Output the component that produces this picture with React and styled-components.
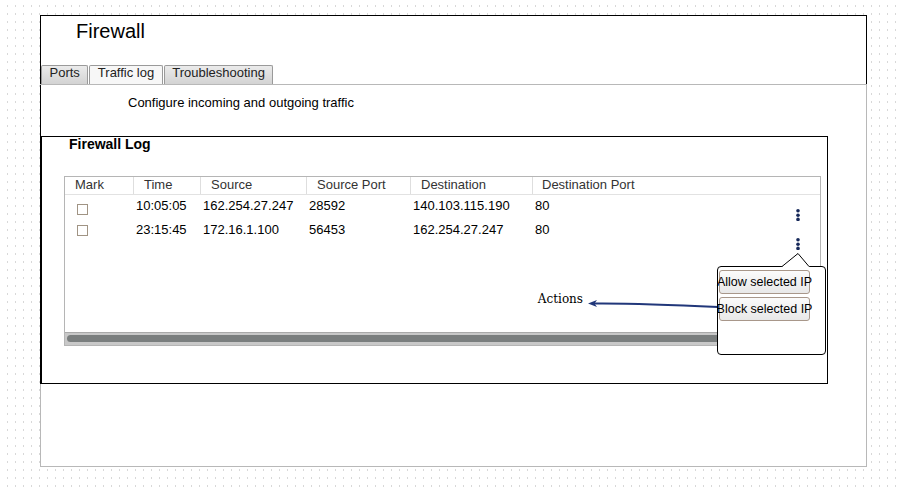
import React from "react";
import styled, { createGlobalStyle } from "styled-components";

const rows = [
  { id: 1, time: "10:05:05", source: "162.254.27.247", sourcePort: "28592", dest: "140.103.115.190", destPort: "80", boxTop: 9, dotsTop: 14 },
  { id: 2, time: "23:15:45", source: "172.16.1.100", sourcePort: "56453", dest: "162.254.27.247", destPort: "80", boxTop: 6, dotsTop: 19 },
];

const columns = ["Mark", "Time", "Source", "Source Port", "Destination", "Destination Port"];
const tabs = ["Ports", "Traffic log", "Troubleshooting"];

const Kebab = () => (
  <svg width="4" height="12" viewBox="0 0 4 12">
    <circle cx="2" cy="1.8" r="1.8" fill="#17295a" />
    <circle cx="2" cy="6.2" r="1.8" fill="#17295a" />
    <circle cx="2" cy="10.4" r="1.8" fill="#17295a" />
  </svg>
);

const App = () => {
  const [active, setActive] = React.useState("Traffic log");
  return (
    <Page>
      <GlobalStyle />
      <Window>
        <Header>
          <Title>Firewall</Title>
          <Tabs>
            {tabs.map((t) => (
              <Tab key={t} $active={t === active} onClick={() => setActive(t)}>
                {t}
              </Tab>
            ))}
          </Tabs>
        </Header>
        <Content>
          <Body>
            <Description>Configure incoming and outgoing traffic</Description>
            <LogPanel>
              <PanelTitle>Firewall Log</PanelTitle>
              <Table>
                <HeaderRow>
                  {columns.map((c) => (
                    <HeaderCell key={c}>{c}</HeaderCell>
                  ))}
                </HeaderRow>
                {rows.map((r) => (
                  <Row key={r.id}>
                    <MarkCell>
                      <Checkbox $top={r.boxTop} />
                    </MarkCell>
                    <Cell>{r.time}</Cell>
                    <Cell>{r.source}</Cell>
                    <Cell>{r.sourcePort}</Cell>
                    <Cell>{r.dest}</Cell>
                    <LastCell>
                      <span>{r.destPort}</span>
                      <DotsButton $top={r.dotsTop}>
                        <Kebab />
                      </DotsButton>
                    </LastCell>
                  </Row>
                ))}
                <Spacer />
                <Scrollbar>
                  <Thumb />
                </Scrollbar>
              </Table>

              <Annotation>
                <AnnotationLabel>Actions</AnnotationLabel>
                <svg width="131" height="12" viewBox="0 0 131 12">
                  <path d="M7 5.5 C 40 5.2, 90 7, 131 9" stroke="#21377a" strokeWidth="2" fill="none" />
                  <path d="M1 5.5 L10 2 L7.5 5.5 L10 9 Z" fill="#21377a" />
                </svg>
              </Annotation>

              <Popup>
                <Caret width="30" height="15" viewBox="0 0 30 15">
                  <polygon points="0,14.5 17,0.5 29,14.5" fill="#fff" />
                  <polyline points="1,13.5 17,0.5 28,13.5" fill="none" stroke="#000" strokeWidth="1" />
                </Caret>
                <ActionButton>Allow selected IP</ActionButton>
                <ActionButton>Block selected IP</ActionButton>
              </Popup>
            </LogPanel>
          </Body>
          <Filler />
        </Content>
      </Window>
    </Page>
  );
};

const GlobalStyle = createGlobalStyle`
  html, body {
    margin: 0;
    padding: 0;
  }
  body {
    width: 900px;
    height: 492px;
    overflow: hidden;
    background-color: #fff;
    background-image: radial-gradient(0.6px 1.1px at 7.5px 6px, #d8d8d8 99%, transparent 100%);
    background-size: 8px 8px;
    font-family: "Liberation Sans", Arial, sans-serif;
    color: #000;
  }
  * {
    box-sizing: border-box;
  }
`;

const Page = styled.div`
  padding: 15px 0 0 40px;
`;
const Window = styled.div`
  width: 827px;
  height: 452px;
  display: flex;
  flex-direction: column;
  background: #fff;
`;
const Header = styled.div`
  height: 69px;
  display: flex;
  flex-direction: column;
  border: 1px solid #000;
  border-bottom: none;
`;
const Title = styled.h1`
  margin: 0;
  padding: 4px 0 0 35px;
  font-size: 20px;
  line-height: 23px;
  font-weight: normal;
`;
const Tabs = styled.div`
  margin-top: auto;
  display: flex;
  align-items: flex-end;
  gap: 1px;
`;
const Tab = styled.div`
  height: 19px;
  padding: 0 7.5px;
  border: 1px solid #9a9a9a;
  border-bottom: none;
  border-radius: 2px 2px 0 0;
  background: ${(p) => (p.$active ? "#f7f7f7" : "linear-gradient(#ebebeb, #d3d3d3)")};
  font-size: 13px;
  line-height: 14px;
  color: #222;
  white-space: nowrap;
  cursor: pointer;
`;
const Content = styled.div`
  flex: 1;
  display: flex;
  flex-direction: column;
  border: 1px solid #b8b8b8;
  border-left: none;
`;
const Body = styled.div`
  border-left: 1px solid #000;
`;
const Filler = styled.div`
  flex: 1;
  border-left: 1px solid #b8b8b8;
`;
const Description = styled.p`
  margin: 0;
  padding: 10px 0 0 87px;
  font-size: 13px;
  line-height: 15px;
`;
const LogPanel = styled.div`
  position: relative;
  margin-top: 26px;
  width: 787px;
  height: 248px;
  border: 1px solid #000;
`;
const PanelTitle = styled.h2`
  margin: 0;
  padding-left: 27px;
  font-size: 14px;
  line-height: 15px;
  font-weight: bold;
`;
const Table = styled.div`
  margin: 24px 0 0 22px;
  width: 757px;
  height: 170px;
  border: 1px solid #b5b5b5;
  display: flex;
  flex-direction: column;
`;
const grid = `
  display: grid;
  grid-template-columns: 69px 67px 106px 104px 122px 1fr;
`;
const HeaderRow = styled.div`
  ${grid}
  height: 18px;
  border-bottom: 1px solid #e2e2e2;
`;
const HeaderCell = styled.div`
  padding-left: 10px;
  border-right: 1px solid #dedede;
  font-size: 13px;
  line-height: 16px;
  color: #333;
  &:last-child {
    border-right: none;
    padding-left: 9px;
  }
`;
const Row = styled.div`
  ${grid}
  height: 24px;
  font-size: 13px;
  line-height: 22px;
`;
const Cell = styled.div`
  padding-left: 2px;
  white-space: nowrap;
`;
const MarkCell = styled.div`
  padding-left: 12px;
`;
const Checkbox = styled.span`
  display: block;
  width: 11px;
  height: 11px;
  margin-top: ${(p) => p.$top}px;
  border: 1px solid #a09484;
  background: #fff;
`;
const LastCell = styled(Cell)`
  display: flex;
  justify-content: space-between;
  align-items: flex-start;
  padding-right: 20px;
`;
const DotsButton = styled.span`
  display: block;
  height: 12px;
  margin-top: ${(p) => p.$top}px;
  line-height: 0;
`;
const Spacer = styled.div`
  flex: 1;
`;
const Scrollbar = styled.div`
  height: 13px;
  padding: 2px 20px 0 2px;
  border-top: 1px solid #a9a9a9;
  background: #c8c8c8;
`;
const Thumb = styled.div`
  height: 7px;
  border-radius: 3.5px;
  background: #7a7e7e;
`;
const Annotation = styled.div`
  position: absolute;
  right: 109px;
  top: 154px;
  display: flex;
  align-items: flex-start;
  svg {
    margin: 7px 0 0 4px;
  }
`;
const AnnotationLabel = styled.span`
  font-family: "DejaVu Serif", "Liberation Serif", serif;
  font-size: 12px;
  line-height: 16px;
`;
const Popup = styled.div`
  position: absolute;
  left: 675px;
  top: 129px;
  width: 109px;
  height: 89px;
  padding: 3px 0 0 1px;
  display: flex;
  flex-direction: column;
  align-items: flex-start;
  gap: 3px;
  border: 1px solid #000;
  border-radius: 4px;
  background: #fff;
`;
const Caret = styled.svg`
  position: absolute;
  left: 63px;
  top: -14px;
`;
const ActionButton = styled.div`
  width: 91px;
  height: 24px;
  display: flex;
  align-items: center;
  justify-content: center;
  white-space: nowrap;
  border: 1px solid #a8978a;
  border-radius: 3px;
  background: linear-gradient(#fbfbfb, #e8e8e8);
  font-size: 12.5px;
  cursor: pointer;
`;

export default App;
